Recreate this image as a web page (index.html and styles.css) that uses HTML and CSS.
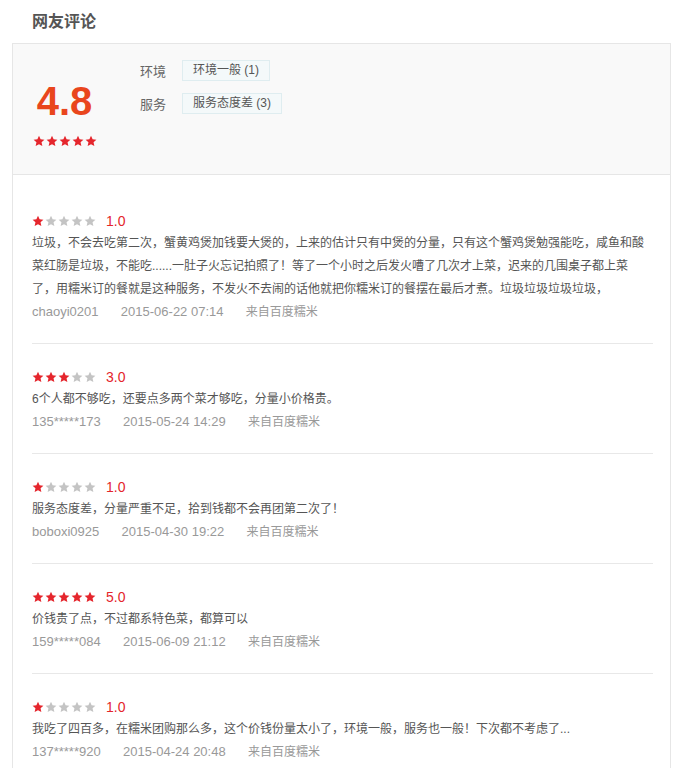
FILE: index.html
```html
<!DOCTYPE html>
<html lang="zh-CN">
<head>
    <meta charset="UTF-8">
    <title>网友评论</title>
    <link rel="stylesheet" href="styles.css">
</head>
<body>
    <svg class="defs" width="0" height="0">
        <symbol id="star" viewBox="0 0 24 24">
            <path d="M12 1.5l3.2 7.1 7.6.8-5.7 5.2 1.6 7.6L12 18.3l-6.7 3.9 1.6-7.6L1.2 9.4l7.6-.8z"/>
        </symbol>
    </svg>

    <div class="page">
        <h2 class="title">网友评论</h2>

        <div class="comments">
            <div class="summary">
                <div class="score">
                    <div class="score-num">4.8</div>
                    <div class="stars big" data-rate="5"></div>
                </div>
                <div class="tags">
                    <div class="tag-row">
                        <span class="tag-label">环境</span>
                        <span class="tag">环境一般 (1)</span>
                    </div>
                    <div class="tag-row">
                        <span class="tag-label">服务</span>
                        <span class="tag">服务态度差 (3)</span>
                    </div>
                </div>
            </div>

            <ul class="review-list" id="review-list">
                <!-- reviews filled in below -->
            </ul>
        </div>
    </div>

    <script>
        const reviews = [
            { rate: 1, text: '垃圾，不会去吃第二次，蟹黄鸡煲加钱要大煲的，上来的估计只有中煲的分量，只有这个蟹鸡煲勉强能吃，咸鱼和酸菜红肠是垃圾，不能吃......一肚子火忘记拍照了！等了一个小时之后发火嘈了几次才上菜，迟来的几围桌子都上菜了，用糯米订的餐就是这种服务，不发火不去闹的话他就把你糯米订的餐摆在最后才煮。垃圾垃圾垃圾垃圾，', user: 'chaoyi0201', time: '2015-06-22 07:14' },
            { rate: 3, text: '6个人都不够吃，还要点多两个菜才够吃，分量小价格贵。', user: '135*****173', time: '2015-05-24 14:29' },
            { rate: 1, text: '服务态度差，分量严重不足，拾到钱都不会再团第二次了！', user: 'boboxi0925', time: '2015-04-30 19:22' },
            { rate: 5, text: '价钱贵了点，不过都系特色菜，都算可以', user: '159*****084', time: '2015-06-09 21:12' },
            { rate: 1, text: '我吃了四百多，在糯米团购那么多，这个价钱份量太小了，环境一般，服务也一般！下次都不考虑了...', user: '137*****920', time: '2015-04-24 20:48' }
        ];

        function starsHtml(rate) {
            let html = '';
            for (let i = 0; i < 5; i++) {
                html += `<svg class="star${i < rate ? ' on' : ''}"><use href="#star"/></svg>`;
            }
            return html;
        }

        document.querySelectorAll('.stars[data-rate]').forEach(el => {
            el.innerHTML = starsHtml(+el.getAttribute('data-rate'));
        });

        const list = document.getElementById('review-list');
        reviews.forEach(r => {
            const li = document.createElement('li');
            li.classList.add('review');
            li.innerHTML = `
                <div class="review-rate">
                    <span class="stars">${starsHtml(r.rate)}</span>
                    <span class="rate-num">${r.rate.toFixed(1)}</span>
                </div>
                <p class="review-text">${r.text}</p>
                <div class="review-meta">
                    <span class="user">${r.user}</span>
                    <span class="time">${r.time}</span>
                    <span class="from">来自百度糯米</span>
                </div>
            `;
            list.appendChild(li);
        });
    </script>
</body>
</html>
```

FILE: styles.css
```css
* {
    margin: 0;
    padding: 0;
    box-sizing: border-box;
}

body {
    background: #ffffff;
    color: #555;
    font-family: 'Liberation Sans', 'Noto Sans CJK SC', sans-serif;
    font-size: 12px;
}

.defs {
    position: absolute;
}

.page {
    padding: 11px 18px 0 12px;
}

.title {
    padding-left: 20px;
    margin-bottom: 10px;
    font-size: 16px;
    line-height: 22px;
    font-weight: bold;
    color: #555;
}

.comments {
    border: 1px solid #e6e6e6;
}

/* summary */
.summary {
    display: flex;
    height: 131px;
    background: #f9f9f9;
    border-bottom: 1px solid #e6e6e6;
}

.score {
    width: 103px;
    padding-top: 37px;
    text-align: center;
}

.score-num {
    font-family: 'Liberation Sans', Arial, sans-serif;
    font-size: 40px;
    line-height: 40px;
    font-weight: bold;
    color: #e9461d;
}

.stars {
    display: inline-flex;
    gap: 1px;
}

.stars.big {
    margin-top: 14px;
    display: flex;
    justify-content: center;
}

.star {
    width: 12px;
    height: 12px;
    fill: #c4c4c4;
}

.star.on {
    fill: #e5262d;
}

.tags {
    padding: 16px 0 0 24px;
}

.tag-row {
    display: flex;
    align-items: center;
    margin-bottom: 12px;
}

.tag-label {
    width: 42px;
    font-size: 13px;
    color: #666;
}

.tag {
    height: 21px;
    line-height: 19px;
    padding: 0 10px;
    background: #f4f9fa;
    border: 1px solid #dfedf0;
    color: #555;
}

/* reviews */
.review-list {
    list-style: none;
    padding: 13px 17px 0 19px;
}

.review {
    padding: 22px 0 20px;
    border-bottom: 1px solid #e8e8e8;
}

.review-rate {
    display: flex;
    align-items: center;
    height: 22px;
}

.rate-num {
    margin-left: 10px;
    font-size: 14px;
    color: #e4252b;
}

.review-text {
    padding-right: 6px;
    line-height: 23px;
    color: #555;
}

.review-meta {
    line-height: 22px;
    color: #999;
}

.review-meta span {
    margin-right: 19px;
}

.review-meta .user,
.review-meta .time {
    font-size: 13px;
}
```
